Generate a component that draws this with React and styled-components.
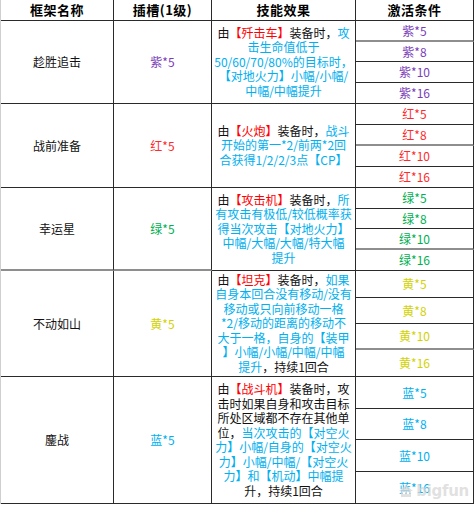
import React from 'react';
import styled, { createGlobalStyle } from 'styled-components';

const Global = createGlobalStyle`
  html, body { margin: 0; padding: 0; background: #fff; }
  body { font-family: "Noto Sans CJK SC", "Noto Sans", sans-serif; }
`;

const C = {
  k: '#111111',
  r: '#ff0000',
  b: '#00b0f0',
};

const Table = styled.div`
  position: relative;
  display: grid;
  grid-template-columns: 113px 98px 144px 118px;
  grid-template-rows: ${(p) => p.$rows};
  width: 474px;
  border-left: 1px solid #cfcfcf;
  overflow: hidden;
`;

const Cell = styled.div`
  box-sizing: border-box;
  grid-row: span ${(p) => p.$span || 1};
  border-right: 1px solid #2a2a2a;
  border-bottom: ${(p) => (p.$soft ? '2px solid #8e8e8e' : '1px solid #2a2a2a')};
  display: flex;
  align-items: center;
  justify-content: center;
  font-size: 12px;
  line-height: 14px;
  color: ${(p) => p.$color || '#111'};
  white-space: nowrap;
`;

const HeadCell = styled(Cell)`
  font-size: 13px;
  font-weight: 700;
  color: #000;
  letter-spacing: 0.5px;
`;

const SkillCell = styled(Cell)`
  flex-direction: column;
  line-height: 14.5px;
  padding: 0 1px;
`;

const Line = styled.div`
  text-align: center;
  white-space: nowrap;
`;

const Seg = styled.span`
  color: ${(p) => C[p.$c]};
`;

const Watermark = styled.div`
  position: absolute;
  right: 6px;
  bottom: 4px;
  display: flex;
  align-items: center;
  gap: 2px;
  font-family: "DejaVu Sans", sans-serif;
  font-weight: 700;
  font-size: 15px;
  color: rgba(215, 215, 215, 0.75);
  pointer-events: none;
  letter-spacing: -0.3px;
`;

const rowsData = [
  {
    name: '趁胜追击',
    slot: '紫*5',
    color: '#7a3db8',
    heights: [21, 20, 21, 21],
    soft: [true, false, false, false],
    lines: [
      [['k', '由'], ['r', '【歼击车】'], ['k', '装备时，'], ['b', '攻']],
      [['b', '击生命值低于']],
      [['b', '50/60/70/80%的目标时，']],
      [['b', '【对地火力】小幅/小幅/']],
      [['b', '中幅/中幅提升']],
    ],
    conds: ['紫*5', '紫*8', '紫*10', '紫*16'],
  },
  {
    name: '战前准备',
    slot: '红*5',
    color: '#ff2a2a',
    heights: [21, 21, 21, 21],
    soft: [false, true, false, false],
    lines: [
      [['k', '由'], ['r', '【火炮】'], ['k', '装备时，'], ['b', '战斗']],
      [['b', '开始的第一*2/前两*2回']],
      [['b', '合获得1/2/2/3点【CP】']],
    ],
    conds: ['红*5', '红*8', '红*10', '红*16'],
  },
  {
    name: '幸运星',
    slot: '绿*5',
    color: '#00b050',
    heights: [21, 20, 21, 21],
    soft: [false, false, true, false],
    softMain: true,
    lines: [
      [['k', '由'], ['r', '【攻击机】'], ['k', '装备时，'], ['b', '所']],
      [['b', '有攻击有极低/较低概率获']],
      [['b', '得当次攻击【对地火力】']],
      [['b', '中幅/大幅/大幅/特大幅']],
      [['b', '提升']],
    ],
    conds: ['绿*5', '绿*8', '绿*10', '绿*16'],
  },
  {
    name: '不动如山',
    slot: '黄*5',
    color: '#d2d200',
    heights: [27, 26, 26, 27],
    soft: [false, false, true, false],
    lines: [
      [['k', '由'], ['r', '【坦克】'], ['k', '装备时，'], ['b', '如果']],
      [['b', '自身本回合没有移动/没有']],
      [['b', '移动或只向前移动一格']],
      [['b', '*2/移动的距离的移动不']],
      [['b', '大于一格，自身的【装甲']],
      [['b', '】小幅/小幅/中幅/中幅']],
      [['b', '提升'], ['k', '，持续1回合']],
    ],
    conds: ['黄*5', '黄*8', '黄*10', '黄*16'],
  },
  {
    name: '鏖战',
    slot: '蓝*5',
    color: '#00b0f0',
    heights: [32, 31, 32, 32],
    soft: [false, false, false, false],
    lines: [
      [['k', '由'], ['r', '【战斗机】'], ['k', '装备时，攻']],
      [['k', '击时如果自身和攻击目标']],
      [['k', '所处区域都不存在其他单']],
      [['k', '位，'], ['b', '当次攻击的【对空火']],
      [['b', '力】小幅/自身的【对空火']],
      [['b', '力】小幅/中幅/【对空火']],
      [['b', '力】和【机动】中幅提']],
      [['k', '升，持续1回合']],
    ],
    conds: ['蓝*5', '蓝*8', '蓝*10', '蓝*16'],
  },
];

const gridRows = ['21px', ...rowsData.flatMap((r) => r.heights.map((h) => `${h}px`))].join(' ');

function Logo() {
  return (
    <svg width="16" height="14" viewBox="0 0 16 14">
      <path d="M1 7 L8 1 L15 7 L13 7 L13 13 L3 13 L3 7 Z" fill="rgba(215,215,215,0.75)" />
      <circle cx="6" cy="9" r="1.2" fill="#fff" />
      <circle cx="10" cy="9" r="1.2" fill="#fff" />
    </svg>
  );
}

export default function App() {
  return (
    <>
      <Global />
      <Table $rows={gridRows}>
        <HeadCell>框架名称</HeadCell>
        <HeadCell>插槽(1级)</HeadCell>
        <HeadCell>技能效果</HeadCell>
        <HeadCell>激活条件</HeadCell>
        {rowsData.map((row) => (
          <React.Fragment key={row.name}>
            <Cell $span={4} $soft={row.softMain}>{row.name}</Cell>
            <Cell $span={4} $color={row.color} $soft={row.softMain}>{row.slot}</Cell>
            <SkillCell $span={4}>
              {row.lines.map((line, i) => (
                <Line key={i}>
                  {line.map(([c, t], j) => (
                    <Seg key={j} $c={c}>{t}</Seg>
                  ))}
                </Line>
              ))}
            </SkillCell>
            {row.conds.map((c, i) => (
              <Cell key={c} $color={row.color} $soft={row.soft[i]}>{c}</Cell>
            ))}
          </React.Fragment>
        ))}
        <Watermark>
          <Logo />
          bigfun
        </Watermark>
      </Table>
    </>
  );
}
